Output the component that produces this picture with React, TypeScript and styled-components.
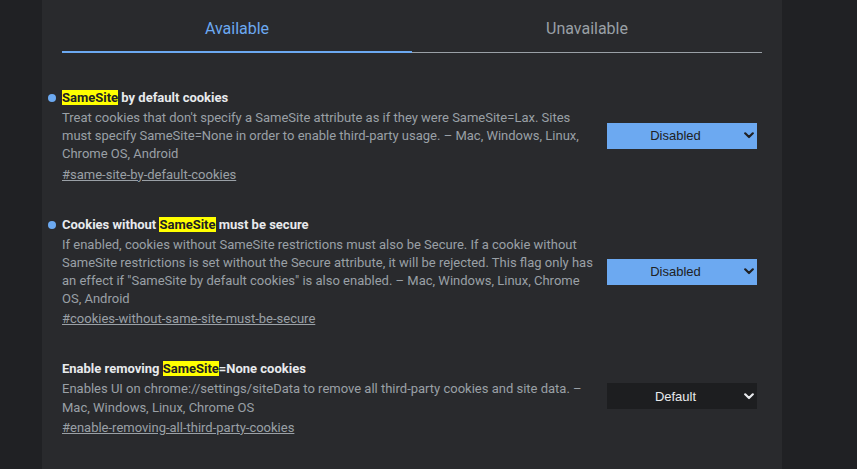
import React from "react";
import styled, { createGlobalStyle } from "styled-components";

const Global = createGlobalStyle`
  html, body { margin: 0; padding: 0; background: #202124; }
  body { font-family: Roboto, "Liberation Sans", Arial, sans-serif; }
`;

const Page = styled.div`
  display: flex;
  min-height: 469px;
  background: #202124;
`;

const Panel = styled.main`
  margin-left: 42px;
  width: 740px;
  min-height: 469px;
  background: #292a2d;
  padding: 0 20px;
  box-sizing: border-box;
`;

const Tabs = styled.div`
  display: flex;
  align-items: flex-end;
`;

const Tab = styled.div<{ $active?: boolean }>`
  flex: 1;
  text-align: center;
  font-size: 16px;
  line-height: 20px;
  padding-top: 19px;
  padding-bottom: ${(p) => (p.$active ? "12px" : "13px")};
  color: ${(p) => (p.$active ? "#6ca9f1" : "#9aa0a6")};
  border-bottom: ${(p) => (p.$active ? "2px solid #6ca9f1" : "1px solid #9aa0a6")};
`;

const List = styled.div`
  display: flex;
  flex-direction: column;
  gap: 31px;
  padding-top: 35px;
`;

const Row = styled.section`
  display: flex;
  align-items: center;
  gap: 9px;
  padding-right: 5px;
`;

const Info = styled.div`
  flex: 1;
  min-width: 0;
  font-size: 13px;
`;

const Title = styled.div`
  display: flex;
  align-items: center;
  font-weight: 700;
  color: #e8eaed;
  line-height: 18px;
  margin-top: 1px;
  margin-bottom: 2px;
`;

const Dot = styled.span`
  width: 8px;
  height: 8px;
  border-radius: 50%;
  background: #6ca9f1;
  margin-left: -14px;
  margin-right: 6px;
  flex: none;
`;

const Mark = styled.mark`
  background: #ffff00;
  color: #202124;
`;

const Desc = styled.p`
  margin: 0;
  color: #9aa0a6;
  line-height: 18.2px;
`;

const Link = styled.a`
  display: inline-block;
  margin-top: 2px;
  line-height: 18px;
  color: #9aa0a6;
  text-decoration: underline;
`;

const Select = styled.div<{ $on?: boolean }>`
  flex: none;
  width: 150px;
  height: 26px;
  display: flex;
  align-items: center;
  box-sizing: border-box;
  padding-right: 3px;
  margin-bottom: ${(p) => (p.$on ? "0" : "4px")};
  background: ${(p) => (p.$on ? "#6ca9f1" : "#1d1e20")};
  color: ${(p) => (p.$on ? "#202124" : "#e8eaed")};
  font-family: "Liberation Sans", Arial, sans-serif;
  font-size: 13px;
`;

const SelectLabel = styled.span`
  width: 137px;
  text-align: center;
`;

const Chevron = ({ color }: { color: string }) => (
  <svg width="10" height="7" viewBox="0 0 10 7">
    <path d="M1.2 1.3 L5 5 L8.8 1.3" fill="none" stroke={color} strokeWidth="2.2" strokeLinecap="round" strokeLinejoin="round" />
  </svg>
);

type Item = {
  title: React.ReactNode;
  desc: string;
  link: string;
  value: string;
  changed: boolean;
};

const items: Item[] = [
  {
    title: (
      <>
        <Mark>SameSite</Mark>&nbsp;by default cookies
      </>
    ),
    desc: "Treat cookies that don't specify a SameSite attribute as if they were SameSite=Lax. Sites must specify SameSite=None in order to enable third-party usage. – Mac, Windows, Linux, Chrome OS, Android",
    link: "#same-site-by-default-cookies",
    value: "Disabled",
    changed: true,
  },
  {
    title: (
      <>
        Cookies without&nbsp;<Mark>SameSite</Mark>&nbsp;must be secure
      </>
    ),
    desc: "If enabled, cookies without SameSite restrictions must also be Secure. If a cookie without SameSite restrictions is set without the Secure attribute, it will be rejected. This flag only has an effect if \"SameSite by default cookies\" is also enabled. – Mac, Windows, Linux, Chrome OS, Android",
    link: "#cookies-without-same-site-must-be-secure",
    value: "Disabled",
    changed: true,
  },
  {
    title: (
      <>
        Enable removing&nbsp;<Mark>SameSite</Mark>=None cookies
      </>
    ),
    desc: "Enables UI on chrome://settings/siteData to remove all third-party cookies and site data. – Mac, Windows, Linux, Chrome OS",
    link: "#enable-removing-all-third-party-cookies",
    value: "Default",
    changed: false,
  },
];

export default function App() {
  return (
    <>
      <Global />
      <Page>
        <Panel>
          <Tabs>
            <Tab $active>Available</Tab>
            <Tab>Unavailable</Tab>
          </Tabs>
          <List>
            {items.map((it) => (
              <Row key={it.link}>
                <Info>
                  <Title>
                    {it.changed && <Dot />}
                    <span>{it.title}</span>
                  </Title>
                  <Desc>{it.desc}</Desc>
                  <Link href={it.link}>{it.link}</Link>
                </Info>
                <Select $on={it.changed}>
                  <SelectLabel>{it.value}</SelectLabel>
                  <Chevron color={it.changed ? "#202124" : "#e8eaed"} />
                </Select>
              </Row>
            ))}
          </List>
        </Panel>
      </Page>
    </>
  );
}
